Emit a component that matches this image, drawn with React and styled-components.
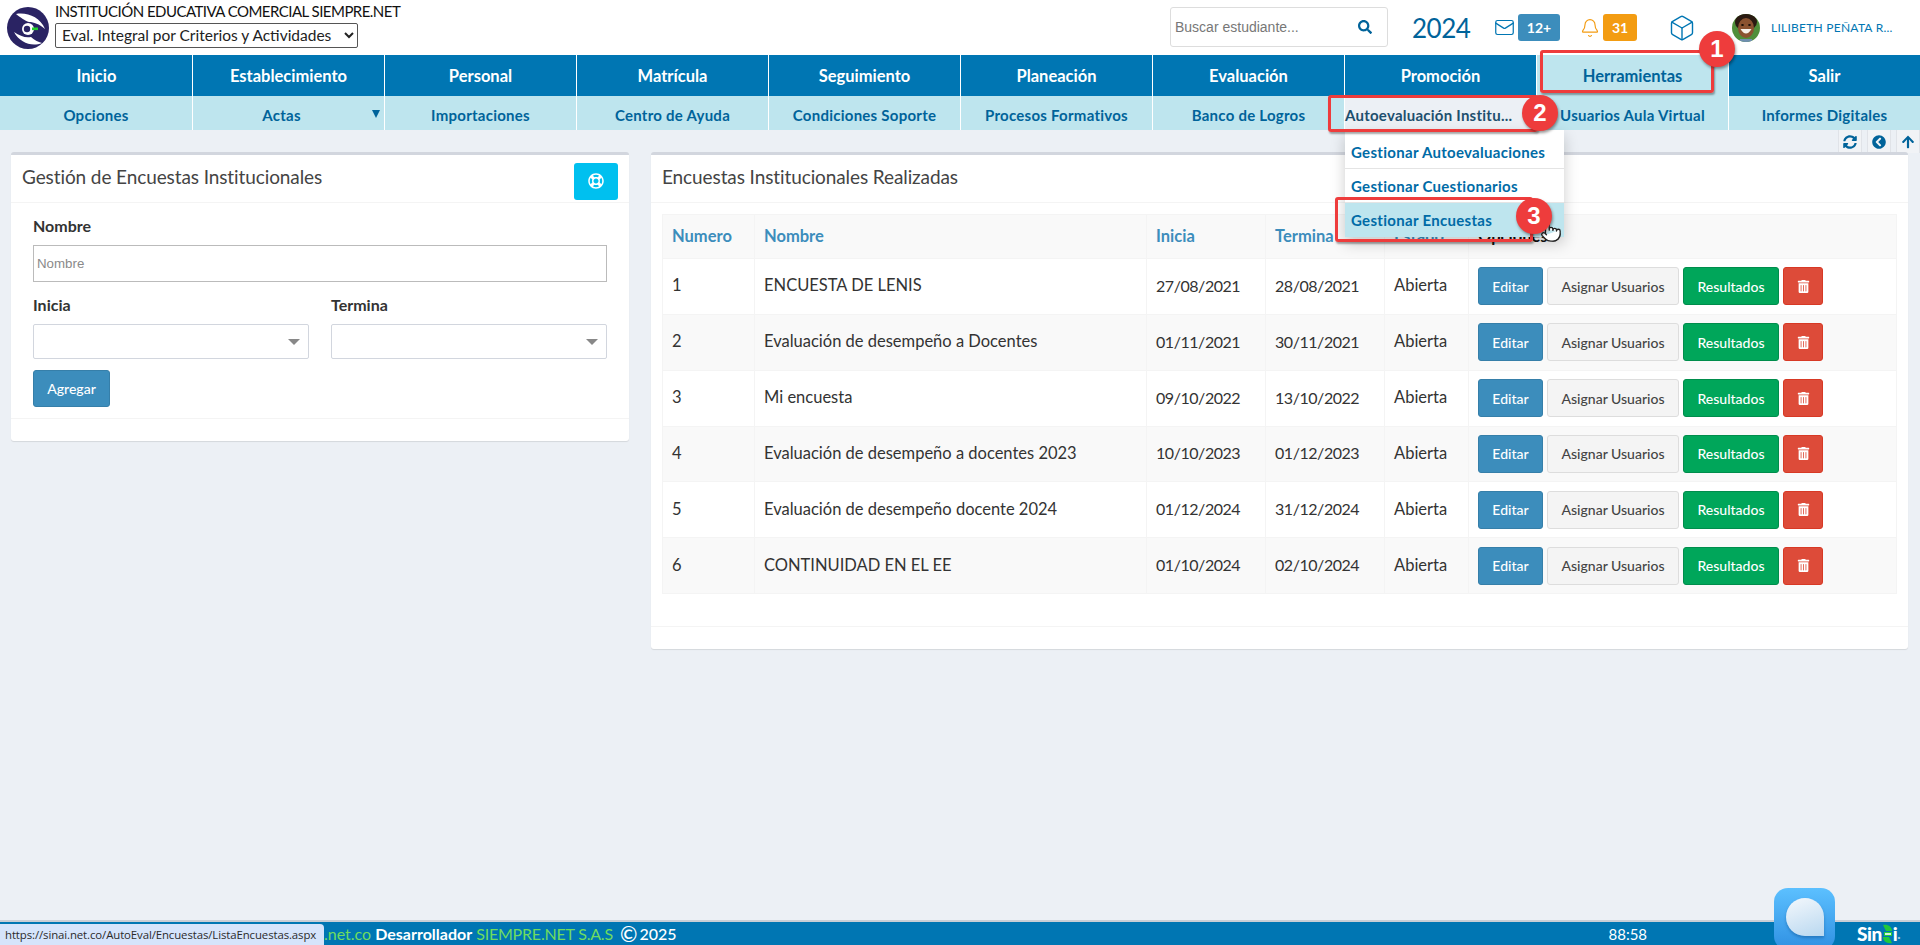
import React from 'react';
import styled, { createGlobalStyle } from 'styled-components';
import { Bell, Box, Mail, Pointer } from 'lucide-react';
import { FaArrowUp, FaChevronCircleLeft, FaRegLifeRing, FaSearch, FaSyncAlt, FaTrashAlt } from 'react-icons/fa';

const FONT = `Lato, "Open Sans", "Liberation Sans", sans-serif`;

const GlobalStyle = createGlobalStyle`
  html, body { margin: 0; padding: 0; background: #ecf0f5; }
  body { font-family: ${FONT}; color: #333; overflow: hidden; }
  * { box-sizing: border-box; }
`;

const Page = styled.div`
  position: relative;
  width: 1920px;
  height: 945px;
  display: flex;
  flex-direction: column;
  overflow: hidden;
`;

/* cabecera */
const Header = styled.header`
  height: 55px;
  background: #fff;
  display: flex;
  align-items: center;
  padding: 0 20px 0 7px;
`;

const Brand = styled.div`
  display: flex;
  align-items: center;
  gap: 6px;
  margin-right: auto;
`;

const BrandText = styled.div`
  display: flex;
  flex-direction: column;
  gap: 3px;
  margin-top: -5px;
`;

const Institucion = styled.div`
  font-size: 15px;
  line-height: 17px;
  color: #111;
  letter-spacing: -0.53px;
`;

const ModuloSelect = styled.select`
  width: 303px;
  height: 25px;
  font-family: ${FONT};
  font-size: 15.5px;
  color: #222;
  background: #fff;
  border: 1px solid #555;
  border-radius: 2px;
  padding: 0 2px;
`;

const SearchBox = styled.div`
  width: 218px;
  height: 40px;
  margin-top: -1px;
  border: 1px solid #ddd;
  border-radius: 3px;
  display: flex;
  align-items: center;
  justify-content: space-between;
  padding: 0 15px 0 4px;
  font-family: "Liberation Sans", sans-serif;
  font-size: 14px;
  color: #777;
  svg { color: #00639a; font-size: 14px; }
`;

const Year = styled.div`
  width: 82px;
  margin-left: 24px;
  font-size: 26px;
  font-weight: 400;
  color: #00639a;
  letter-spacing: -0.5px;
`;

const IconGroup = styled.div`
  display: flex;
  align-items: center;
  gap: ${({ $gap }) => $gap}px;
  margin-right: ${({ $right }) => $right}px;
  color: ${({ $color }) => $color};
`;

const CountBadge = styled.span`
  width: ${({ $w }) => $w}px;
  height: 27px;
  border-radius: 3px;
  background: ${({ $bg }) => $bg};
  color: #fff;
  font-size: 14px;
  font-weight: 700;
  display: flex;
  align-items: center;
  justify-content: center;
`;

const User = styled.div`
  width: 168px;
  display: flex;
  align-items: center;
  gap: 11px;
  font-size: 12px;
  letter-spacing: 0.25px;
  color: #0076b3;
  white-space: nowrap;
`;

/* menu */
const NavRow = styled.nav`
  display: grid;
  grid-template-columns: repeat(10, 192px);
  height: ${({ $h }) => $h}px;
  background: ${({ $bg }) => $bg};
`;

const MainItem = styled.div`
  display: flex;
  align-items: center;
  justify-content: center;
  border-left: 1px solid #fff;
  font-size: 16.5px;
  font-weight: 700;
  color: ${({ $active }) => ($active ? '#00639a' : '#fff')};
  background: ${({ $active }) => ($active ? '#bee5ee' : 'transparent')};
  &:first-child { border-left: 0; margin-left: 1px; }
`;

const SubItem = styled.div`
  position: relative;
  display: flex;
  align-items: center;
  justify-content: ${({ $active }) => ($active ? 'flex-start' : 'center')};
  border-left: 1px solid #fff;
  padding: 3px ${({ $caret }) => ($caret ? '18px' : '4px')} 0 ${({ $active }) => ($active ? '0' : '4px')};
  font-size: 15px;
  font-weight: 700;
  letter-spacing: 0.25px;
  white-space: nowrap;
  color: ${({ $active }) => ($active ? '#1d4f6e' : '#00639a')};
  background: ${({ $active }) => ($active ? '#ecf0f5' : 'transparent')};
  &:first-child { border-left: 0; }
`;

const Caret = styled.span`
  position: absolute;
  right: 4px;
  top: 14px;
  width: 0;
  height: 0;
  border-left: 4px solid transparent;
  border-right: 4px solid transparent;
  border-top: 8px solid #00639a;
`;

const Dropdown = styled.div`
  position: absolute;
  left: 0;
  top: 34px;
  width: 219px;
  background: #fff;
  box-shadow: 0 6px 14px rgba(0, 0, 0, 0.2);
  z-index: 5;
`;

const DropItem = styled.div`
  height: ${({ $h }) => $h}px;
  display: flex;
  align-items: center;
  padding: ${({ $top }) => $top}px 0 0 6px;
  font-size: 15px;
  font-weight: 700;
  letter-spacing: 0.3px;
  color: #006ba6;
  background: ${({ $active }) => ($active ? '#bee5ee' : '#fff')};
  border-bottom: 1px solid ${({ $active }) => ($active ? '#bee5ee' : '#e4e4e4')};
`;

/* contenido */
const Main = styled.main`
  flex: 1;
  min-height: 0;
`;

const Tools = styled.div`
  height: 22px;
  display: flex;
  justify-content: flex-end;
  gap: 5px;
`;

const ToolButton = styled.div`
  width: 24px;
  height: 23px;
  display: flex;
  align-items: center;
  justify-content: center;
  background: #f1f3f6;
  border-left: 1px solid #e0e3e8;
  border-right: 1px solid #e0e3e8;
  color: #00639a;
  font-size: 14px;
`;

const Columns = styled.div`
  display: grid;
  grid-template-columns: 618px 1257px;
  gap: 22px;
  align-items: start;
  padding-left: 11px;
`;

const Box2 = styled.section`
  background: #fff;
  border-top: 3px solid #d2d6de;
  border-radius: 3px;
  box-shadow: 0 1px 1px rgba(0, 0, 0, 0.1);
`;

const BoxHeader = styled.div`
  height: 48px;
  display: flex;
  align-items: center;
  justify-content: space-between;
  padding: 0 11px;
  border-bottom: 1px solid #f4f4f4;
`;

const BoxTitle = styled.h3`
  margin: -4px 0 0;
  font-size: 19px;
  font-weight: 400;
  color: #444;
  letter-spacing: -0.1px;
`;

const HelpButton = styled.button`
  width: 44px;
  height: 37px;
  margin-top: 5px;
  border: 0;
  border-radius: 3px;
  background: #00c0ef;
  color: #fff;
  font-size: 16px;
  display: flex;
  align-items: center;
  justify-content: center;
`;

const FormBody = styled.div`
  padding: 13px 22px 11px;
  border-bottom: 1px solid #f4f4f4;
`;

const FieldLabel = styled.label`
  display: block;
  font-size: 16px;
  line-height: 20px;
  font-weight: 700;
  color: #333;
  margin-bottom: 9px;
`;

const TextInput = styled.input`
  display: block;
  width: 100%;
  height: 37px;
  border: 1px solid #bbb;
  padding: 0 3px;
  font-family: "Liberation Sans", sans-serif;
  font-size: 13.3px;
  outline: none;
  margin-bottom: 13px;
  &::placeholder { color: #8a8a8a; }
`;

const DateGrid = styled.div`
  display: grid;
  grid-template-columns: 276px 276px;
  gap: 22px;
  margin-bottom: 11px;
`;

const FakeSelect = styled.div`
  height: 35px;
  border: 1px solid #d2d6de;
  border-radius: 2px;
  display: flex;
  align-items: center;
  justify-content: flex-end;
  padding-right: 8px;
`;

const SelectArrow = styled.span`
  width: 0;
  height: 0;
  border-left: 6px solid transparent;
  border-right: 6px solid transparent;
  border-top: 6px solid #888;
`;

const Btn = styled.button`
  height: ${({ $h }) => $h || 38}px;
  width: ${({ $w }) => $w}px;
  padding: 0;
  border: 1px solid ${({ $border }) => $border};
  border-radius: 3px;
  background: ${({ $bg }) => $bg};
  color: ${({ $color }) => $color || '#fff'};
  font-family: ${FONT};
  font-size: 14px;
  font-weight: 500;
  display: flex;
  align-items: center;
  justify-content: center;
`;

const BoxFooter = styled.div`
  height: 22px;
`;

const TableWrap = styled.div`
  padding: 11px 11px 32px;
  border-bottom: 1px solid #f4f4f4;
`;

const Table = styled.table`
  width: 1235px;
  table-layout: fixed;
  border-collapse: collapse;
  font-size: 16.5px;
  color: #333;
  th, td { border: 1px solid #f4f4f4; padding: 0 9px 2px; text-align: left; }
  th { height: 44px; font-size: 16.5px; font-weight: 700; color: #3c8dbc; background: #f9f9f9; }
  td { height: 55.85px; }
  tbody tr:nth-child(even) { background: #f9f9f9; }
`;

const OpcionesHead = styled.th`
  && { color: #111; }
`;

const FechaCell = styled.td`
  letter-spacing: -0.45px;
  font-size: 16px;
`;

const ActionCell = styled.td`
  && { padding-bottom: 0; }
`;

const Actions = styled.div`
  display: flex;
  gap: 4px;
`;

/* pie */
const Footer = styled.footer`
  height: 25px;
  background: #0076b3;
  border-top: 2px solid #c9ced6;
  display: flex;
  align-items: center;
  padding-left: 324px;
  font-size: 16px;
  color: #fff;
  gap: 4px;
`;

const Green = styled.span`
  color: #6fdc5f;
  letter-spacing: ${({ $ls }) => $ls || 0}px;
`;

const Desarrollador = styled.span`
  font-weight: 700;
`;

const Copy = styled.span`
  display: flex;
  align-items: center;
  gap: 2px;
  margin-left: 3px;
  font-weight: 500;
`;

const CopySign = styled.span`
  font-size: 21px;
  line-height: 20px;
`;

const Clock = styled.span`
  margin-left: 928px;
  font-size: 15px;
`;

const SinaiLogo = styled.span`
  margin-left: auto;
  margin-right: 20px;
  display: flex;
  align-items: center;
  font-size: 19px;
  font-weight: 900;
  letter-spacing: -0.5px;
`;

const LogoDot = styled.span`
  color: #9fc6dc;
  font-size: 14px;
`;

const StatusTip = styled.div`
  position: absolute;
  left: 0;
  bottom: 0;
  width: 324px;
  height: 21px;
  background: #d6e4fb;
  border-top-right-radius: 4px;
  display: flex;
  align-items: center;
  padding-left: 5px;
  font-family: "Open Sans", sans-serif;
  font-size: 11.4px;
  letter-spacing: -0.1px;
  color: #2b2b2b;
  white-space: nowrap;
  z-index: 7;
`;

const ChatWidget = styled.div`
  position: absolute;
  left: 1774px;
  top: 888px;
  width: 61px;
  height: 62px;
  border-radius: 14px;
  background: linear-gradient(180deg, #5cc0ff, #2f90e2);
  display: flex;
  align-items: center;
  justify-content: center;
  z-index: 7;
`;

const ChatDrop = styled.div`
  width: 38px;
  height: 38px;
  margin-top: -5px;
  border-radius: 50% 50% 0 50%;
  background: linear-gradient(160deg, #f4f8fc, #b9d8f0);
  box-shadow: 0 2px 3px rgba(0, 60, 120, 0.35);
`;

/* anotaciones rojas del tutorial */
const Mark = styled.div`
  position: absolute;
  left: ${({ $x }) => $x}px;
  top: ${({ $y }) => $y}px;
  width: ${({ $w }) => $w}px;
  height: ${({ $h }) => $h}px;
  border: 3px solid #ee3c3c;
  border-radius: 3px;
  box-shadow: 1px 2px 2px rgba(0, 0, 0, 0.35);
  z-index: 8;
`;

const Step = styled.div`
  position: absolute;
  left: ${({ $x }) => $x - 18}px;
  top: ${({ $y }) => $y - 18}px;
  width: 36px;
  height: 36px;
  border-radius: 50%;
  background: #ee3c3c;
  color: #fff;
  font-family: "Liberation Sans", sans-serif;
  font-size: 24px;
  font-weight: 700;
  display: flex;
  align-items: center;
  justify-content: center;
  box-shadow: 1px 2px 3px rgba(0, 0, 0, 0.4);
  z-index: 9;
`;

const HandCursor = styled.div`
  position: absolute;
  left: 1540px;
  top: 221px;
  color: #222;
  z-index: 8;
  display: flex;
`;

const Logo = () => (
  <svg width="42" height="42" viewBox="0 0 42 42">
    <circle cx="21" cy="21" r="21" fill="#2a2363" />
    <path d="M9 7 C20 5 33 10 38 22 C32 17 27 15 22 15 C18 14 13 10 9 7 Z" fill="#fff" />
    <path d="M7 25 C13 29 18 31 24 30 C27 33 31 35 35 36 C25 40 13 36 7 25 Z" fill="#fff" />
    <circle cx="21" cy="22" r="6" fill="#fff" />
    <circle cx="20" cy="22" r="3.2" fill="#2a2363" />
    <rect x="25" y="20.5" width="6" height="2.6" fill="#22d02c" />
  </svg>
);

const Avatar = () => (
  <svg width="28" height="28" viewBox="0 0 28 28">
    <defs>
      <clipPath id="av"><circle cx="14" cy="14" r="14" /></clipPath>
    </defs>
    <g clipPath="url(#av)">
      <rect width="28" height="28" fill="#4f8f3a" />
      <ellipse cx="14" cy="8" rx="11" ry="9" fill="#2a1a12" />
      <ellipse cx="14" cy="14" rx="8" ry="10" fill="#8a5230" />
      <path d="M8.5 15 Q14 24 19.5 15 Z" fill="#f6f0ea" />
      <ellipse cx="10.5" cy="11" rx="1.4" ry="1" fill="#1a0f08" />
      <ellipse cx="17.5" cy="11" rx="1.4" ry="1" fill="#1a0f08" />
      <rect x="8" y="25" width="12" height="3" fill="#6f8fb0" />
    </g>
  </svg>
);

const SinaiMark = () => (
  <svg width="11" height="20" viewBox="0 0 11 20">
    <path d="M1 1 C6 0 10 3 10 7 L4 7 C3 5 2 3 1 1 Z" fill="#22c93a" />
    <path d="M10 19 C5 20 1 17 1 13 L7 13 C8 15 9 17 10 19 Z" fill="#22c93a" />
    <path d="M2 8 H10 V12 H2 Z" fill="#22c93a" />
    <rect x="3" y="9.2" width="6" height="1.6" fill="#fff" />
  </svg>
);

const menuPrincipal = ['Inicio', 'Establecimiento', 'Personal', 'Matrícula', 'Seguimiento', 'Planeación', 'Evaluación', 'Promoción', 'Herramientas', 'Salir'];

const subMenu = ['Opciones', 'Actas', 'Importaciones', 'Centro de Ayuda', 'Condiciones Soporte', 'Procesos Formativos', 'Banco de Logros', 'Autoevaluación Institu...', 'Usuarios Aula Virtual', 'Informes Digitales'];

const encuestas = [
  [1, 'ENCUESTA DE LENIS', '27/08/2021', '28/08/2021'],
  [2, 'Evaluación de desempeño a Docentes', '01/11/2021', '30/11/2021'],
  [3, 'Mi encuesta', '09/10/2022', '13/10/2022'],
  [4, 'Evaluación de desempeño a docentes 2023', '10/10/2023', '01/12/2023'],
  [5, 'Evaluación de desempeño docente 2024', '01/12/2024', '31/12/2024'],
  [6, 'CONTINUIDAD EN EL EE', '01/10/2024', '02/10/2024'],
];

export default function App() {
  return (
    <Page>
      <GlobalStyle />
      <Header>
        <Brand>
          <Logo />
          <BrandText>
            <Institucion>INSTITUCIÓN EDUCATIVA COMERCIAL SIEMPRE.NET</Institucion>
            <ModuloSelect defaultValue="eval">
              <option value="eval">Eval. Integral por Criterios y Actividades</option>
            </ModuloSelect>
          </BrandText>
        </Brand>
        <SearchBox>
          Buscar estudiante...
          <FaSearch />
        </SearchBox>
        <Year>2024</Year>
        <IconGroup $gap={3} $right={20} $color="#0076b3">
          <Mail size={21} strokeWidth={1.4} />
          <CountBadge $w={42} $bg="#3c8dbc">12+</CountBadge>
        </IconGroup>
        <IconGroup $gap={3} $right={31} $color="#f39c12">
          <Bell size={20} strokeWidth={1.4} />
          <CountBadge $w={34} $bg="#f39c12">31</CountBadge>
        </IconGroup>
        <IconGroup $gap={0} $right={36} $color="#0076b3">
          <Box size={28} strokeWidth={1.2} />
        </IconGroup>
        <User>
          <Avatar />
          LILIBETH PEÑATA R...
        </User>
      </Header>

      <NavRow $h={41} $bg="#0076b3">
        {menuPrincipal.map((item) => (
          <MainItem key={item} $active={item === 'Herramientas'}>{item}</MainItem>
        ))}
      </NavRow>
      <NavRow $h={34} $bg="#bee5ee">
        {subMenu.map((item, i) => (
          <SubItem key={item} $active={i === 7} $caret={i === 1}>
            {item}
            {i === 1 && <Caret />}
            {i === 7 && (
              <Dropdown>
                <DropItem $h={39} $top={5}>Gestionar Autoevaluaciones</DropItem>
                <DropItem $h={34} $top={1}>Gestionar Cuestionarios</DropItem>
                <DropItem $h={34} $top={1} $active>Gestionar Encuestas</DropItem>
              </Dropdown>
            )}
          </SubItem>
        ))}
      </NavRow>

      <Main>
        <Tools>
          <ToolButton><FaSyncAlt /></ToolButton>
          <ToolButton><FaChevronCircleLeft /></ToolButton>
          <ToolButton><FaArrowUp /></ToolButton>
        </Tools>
        <Columns>
          <Box2>
            <BoxHeader>
              <BoxTitle>Gestión de Encuestas Institucionales</BoxTitle>
              <HelpButton><FaRegLifeRing /></HelpButton>
            </BoxHeader>
            <FormBody>
              <FieldLabel>Nombre</FieldLabel>
              <TextInput placeholder="Nombre" />
              <DateGrid>
                <div>
                  <FieldLabel>Inicia</FieldLabel>
                  <FakeSelect><SelectArrow /></FakeSelect>
                </div>
                <div>
                  <FieldLabel>Termina</FieldLabel>
                  <FakeSelect><SelectArrow /></FakeSelect>
                </div>
              </DateGrid>
              <Btn $w={77} $h={37} $bg="#3c8dbc" $border="#367fa9">Agregar</Btn>
            </FormBody>
            <BoxFooter />
          </Box2>

          <Box2>
            <BoxHeader>
              <BoxTitle>Encuestas Institucionales Realizadas</BoxTitle>
            </BoxHeader>
            <TableWrap>
              <Table>
                <colgroup>
                  <col style={{ width: 92 }} />
                  <col style={{ width: 392 }} />
                  <col style={{ width: 119 }} />
                  <col style={{ width: 119 }} />
                  <col style={{ width: 84 }} />
                  <col />
                </colgroup>
                <thead>
                  <tr>
                    <th>Numero</th>
                    <th>Nombre</th>
                    <th>Inicia</th>
                    <th>Termina</th>
                    <th>Estado</th>
                    <OpcionesHead>Opciones</OpcionesHead>
                  </tr>
                </thead>
                <tbody>
                  {encuestas.map(([num, nombre, inicia, termina]) => (
                    <tr key={num}>
                      <td>{num}</td>
                      <td>{nombre}</td>
                      <FechaCell>{inicia}</FechaCell>
                      <FechaCell>{termina}</FechaCell>
                      <td>Abierta</td>
                      <ActionCell>
                        <Actions>
                          <Btn $w={65} $bg="#3c8dbc" $border="#367fa9">Editar</Btn>
                          <Btn $w={132} $bg="#f4f4f4" $border="#ddd" $color="#444">Asignar Usuarios</Btn>
                          <Btn $w={96} $bg="#00a65a" $border="#008d4c">Resultados</Btn>
                          <Btn $w={40} $bg="#dd4b39" $border="#d73925"><FaTrashAlt size={13} /></Btn>
                        </Actions>
                      </ActionCell>
                    </tr>
                  ))}
                </tbody>
              </Table>
            </TableWrap>
            <BoxFooter />
          </Box2>
        </Columns>
      </Main>

      <Footer>
        <Green>.net.co</Green>
        <Desarrollador>Desarrollador</Desarrollador>
        <Green $ls={-0.2}>SIEMPRE.NET S.A.S</Green>
        <Copy><CopySign>©</CopySign>2025</Copy>
        <Clock>88:58</Clock>
        <SinaiLogo>Sin<SinaiMark />i<LogoDot>.</LogoDot></SinaiLogo>
      </Footer>
      <StatusTip>https://sinai.net.co/AutoEval/Encuestas/ListaEncuestas.aspx</StatusTip>
      <ChatWidget><ChatDrop /></ChatWidget>

      <Mark $x={1540} $y={50} $w={174} $h={43} />
      <Mark $x={1328} $y={95} $w={210} $h={37} />
      <Mark $x={1335} $y={197} $w={198} $h={45} />
      <HandCursor><Pointer size={22} fill="#fff" strokeWidth={1.4} /></HandCursor>
      <Step $x={1717} $y={49}>1</Step>
      <Step $x={1540} $y={113}>2</Step>
      <Step $x={1534} $y={216}>3</Step>
    </Page>
  );
}
